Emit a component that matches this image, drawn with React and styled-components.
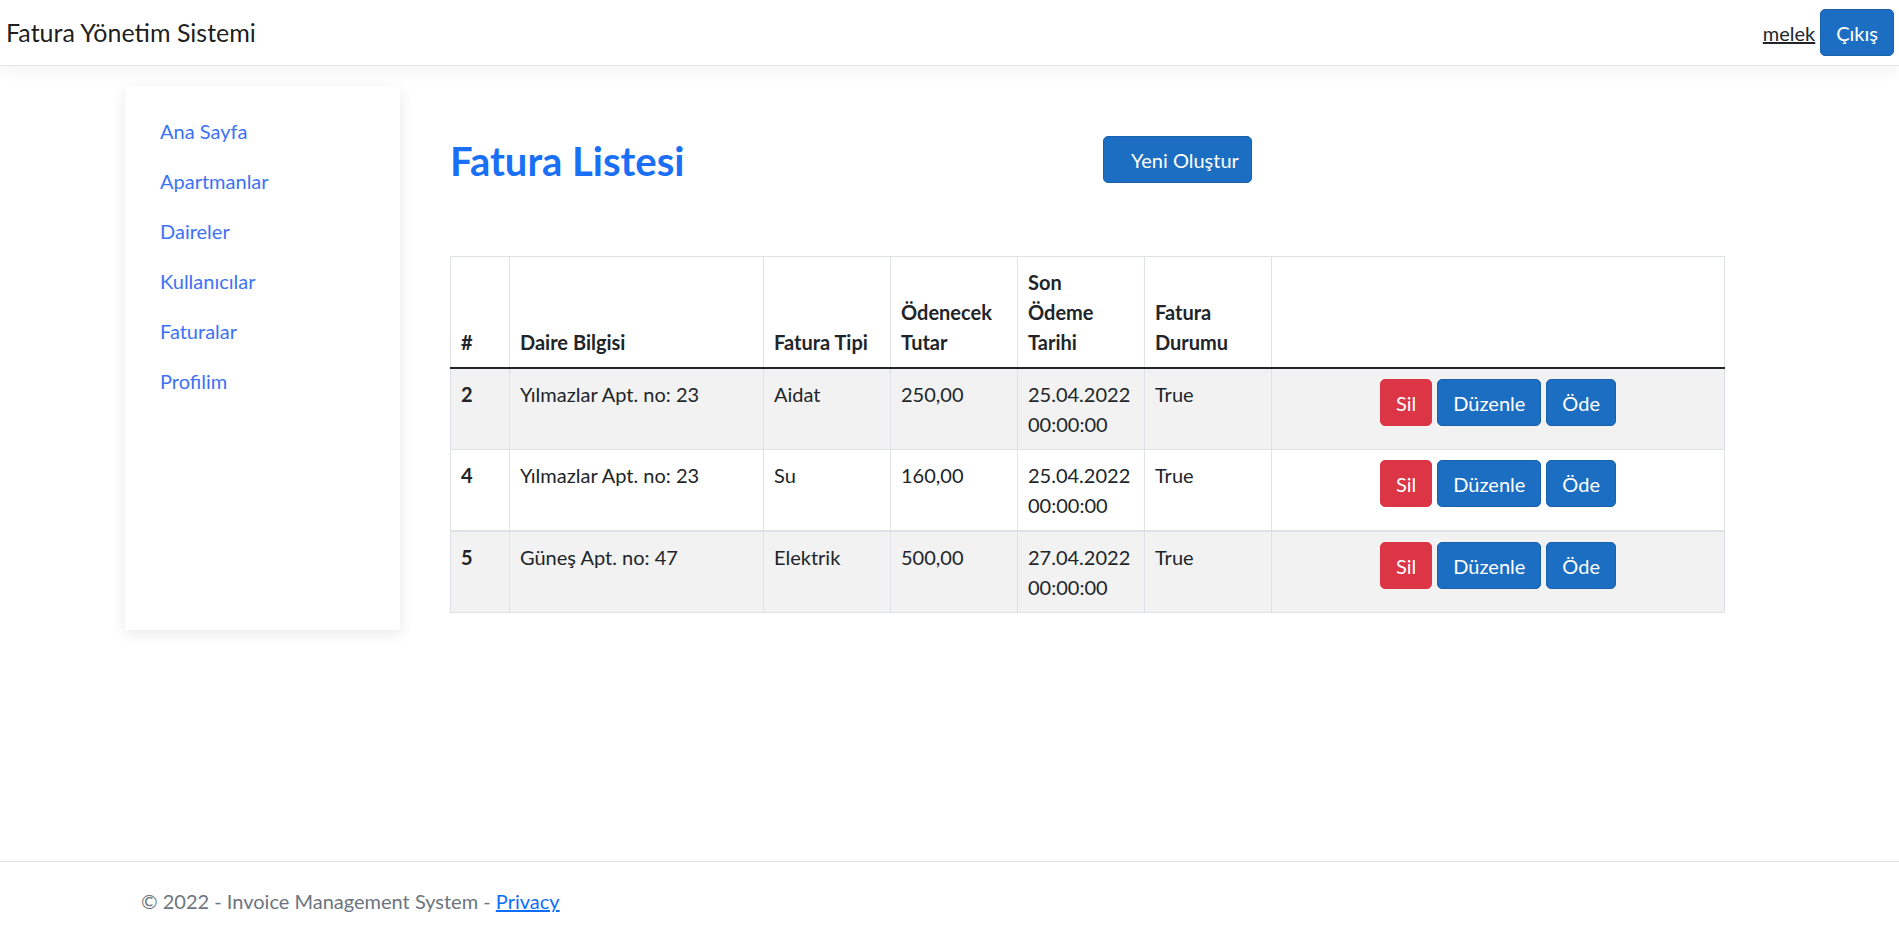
import React from "react";
import styled, { createGlobalStyle } from "styled-components";

const FONT = `"Lato", "Noto Sans", "Liberation Sans", sans-serif`;

const GlobalStyle = createGlobalStyle`
  html, body { margin: 0; padding: 0; }
  body {
    font-family: ${FONT};
    font-size: 20px;
    line-height: 1.5;
    color: #212529;
    background: #fff;
  }
  * { box-sizing: border-box; }
`;

const Page = styled.div`
  min-height: 100vh;
  display: flex;
  flex-direction: column;
`;

const TopBar = styled.header`
  height: 66px;
  display: flex;
  align-items: center;
  justify-content: space-between;
  padding: 0 5px 0 6px;
  border-bottom: 1px solid #e5e5e5;
  box-shadow: 0 5px 15px rgba(0, 0, 0, 0.05);
`;

const Brand = styled.a`
  font-size: 25px;
  line-height: 1.5;
  color: rgba(0, 0, 0, 0.9);
  text-decoration: none;
`;

const UserArea = styled.div`
  display: flex;
  align-items: center;
  gap: 5px;
`;

const UserLink = styled.a`
  color: #212529;
  text-decoration: underline;
  font-size: 20px;
`;

const Button = styled.button`
  font-family: ${FONT};
  font-size: 20px;
  line-height: 30px;
  padding: 7.5px ${(p) => (p.$wide ? "12px 7.5px 27px" : "15px")};
  border-radius: 5px;
  border: 1px solid ${(p) => (p.$variant === "danger" ? "#dc3545" : "#1861ac")};
  background: ${(p) => (p.$variant === "danger" ? "#dc3545" : "#1b6ec2")};
  color: #fff;
  cursor: pointer;
  white-space: nowrap;
`;

const Body = styled.div`
  display: flex;
  align-items: flex-start;
  gap: 50px;
  padding: 20px 0 0 125px;
`;

const SideCard = styled.nav`
  width: 275px;
  height: 544px;
  padding: 20px 15px;
  background: #fff;
  box-shadow: 0 4px 14px rgba(0, 0, 0, 0.09);
  display: flex;
  flex-direction: column;
`;

const NavItem = styled.a`
  display: block;
  padding: 10px 20px;
  line-height: 30px;
  color: #3d72f5;
  text-decoration: none;
  font-size: 20px;
`;

const Main = styled.main`
  width: 1274px;
`;

const TitleRow = styled.div`
  display: grid;
  grid-template-columns: 1fr 1fr;
  align-items: start;
  margin-top: 50px;
`;

const Title = styled.h2`
  margin: 1px 0 0 0;
  font-size: 40px;
  line-height: 1.2;
  font-weight: 700;
  color: #1a6ff7;
`;

const TitleAction = styled.div`
  padding-left: 16px;
`;

const Table = styled.table`
  margin-top: 71px;
  width: 1274px;
  table-layout: fixed;
  border-collapse: collapse;
  border: 1px solid #dee2e6;
`;

const Col = styled.col`
  width: ${(p) => p.$w}px;
`;

const HeadCell = styled.th`
  padding: 10px;
  border: 1px solid #dee2e6;
  border-bottom: 2px solid #212529;
  vertical-align: bottom;
  text-align: left;
  font-weight: 700;
  line-height: 30px;
`;

const Row = styled.tr`
  background: ${(p) => (p.$striped ? "#f2f2f2" : "#fff")};
  border-top: ${(p) => (p.$thick ? "2px" : "1px")} solid #dee2e6;
`;

const RowHead = styled.th`
  padding: 10px;
  border: 1px solid #dee2e6;
  vertical-align: top;
  text-align: left;
  font-weight: 700;
  line-height: 30px;
`;

const Cell = styled.td`
  padding: 10px;
  border: 1px solid #dee2e6;
  vertical-align: top;
  line-height: 30px;
`;

const Actions = styled.div`
  display: flex;
  justify-content: center;
  gap: 5px;
`;

const Footer = styled.footer`
  margin-top: auto;
  height: 67px;
  border-top: 1px solid #dee2e6;
  padding: 24px 0 0 141px;
  color: #6c757d;
  font-size: 20px;
  line-height: 30px;
`;

const FooterLink = styled.a`
  color: #0d6efd;
  text-decoration: underline;
`;

const navItems = ["Ana Sayfa", "Apartmanlar", "Daireler", "Kullanıcılar", "Faturalar", "Profilim"];

const rows = [
  { id: 2, daire: "Yılmazlar Apt. no: 23", tip: "Aidat", tutar: "250,00", tarih: "25.04.2022", durum: "True" },
  { id: 4, daire: "Yılmazlar Apt. no: 23", tip: "Su", tutar: "160,00", tarih: "25.04.2022", durum: "True" },
  { id: 5, daire: "Güneş Apt. no: 47", tip: "Elektrik", tutar: "500,00", tarih: "27.04.2022", durum: "True" },
];

const colWidths = [59, 254, 127, 127, 127, 127, 453];

export default function App() {
  return (
    <Page>
      <GlobalStyle />
      <TopBar>
        <Brand href="#">Fatura Yönetim Sistemi</Brand>
        <UserArea>
          <UserLink href="#">melek</UserLink>
          <Button>Çıkış</Button>
        </UserArea>
      </TopBar>
      <Body>
        <SideCard>
          {navItems.map((n) => (
            <NavItem key={n} href="#">{n}</NavItem>
          ))}
        </SideCard>
        <Main>
          <TitleRow>
            <Title>Fatura Listesi</Title>
            <TitleAction>
              <Button $wide>Yeni Oluştur</Button>
            </TitleAction>
          </TitleRow>
          <Table>
            <colgroup>
              {colWidths.map((w, i) => (
                <Col key={i} $w={w} />
              ))}
            </colgroup>
            <thead>
              <tr>
                <HeadCell>#</HeadCell>
                <HeadCell>Daire Bilgisi</HeadCell>
                <HeadCell>Fatura Tipi</HeadCell>
                <HeadCell>Ödenecek Tutar</HeadCell>
                <HeadCell>
                  Son
                  <br />
                  Ödeme
                  <br />
                  Tarihi
                </HeadCell>
                <HeadCell>Fatura Durumu</HeadCell>
                <HeadCell></HeadCell>
              </tr>
            </thead>
            <tbody>
              {rows.map((r, i) => (
                <Row key={r.id} $striped={i % 2 === 0} $thick={i === 2}>
                  <RowHead>{r.id}</RowHead>
                  <Cell>{r.daire}</Cell>
                  <Cell>{r.tip}</Cell>
                  <Cell>{r.tutar}</Cell>
                  <Cell>
                    {r.tarih}
                    <br />
                    00:00:00
                  </Cell>
                  <Cell>{r.durum}</Cell>
                  <Cell>
                    <Actions>
                      <Button $variant="danger">Sil</Button>
                      <Button>Düzenle</Button>
                      <Button>Öde</Button>
                    </Actions>
                  </Cell>
                </Row>
              ))}
            </tbody>
          </Table>
        </Main>
      </Body>
      <Footer>
        © 2022 - Invoice Management System - <FooterLink href="#">Privacy</FooterLink>
      </Footer>
    </Page>
  );
}
